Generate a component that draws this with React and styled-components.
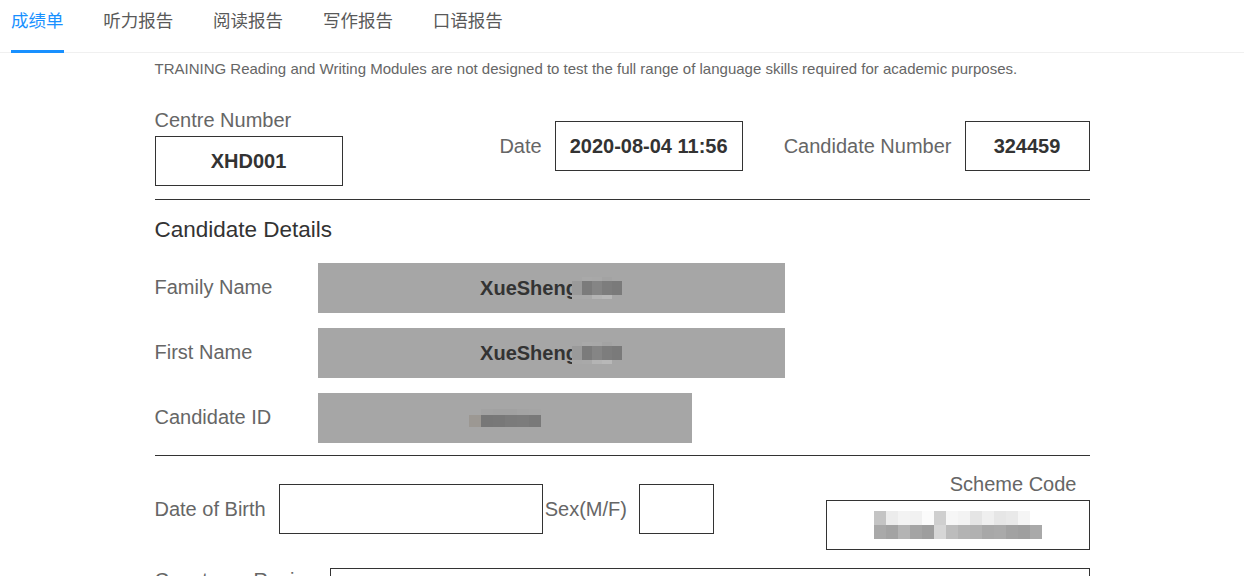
import React from "react";
import styled, { createGlobalStyle } from "styled-components";

const GlobalStyle = createGlobalStyle`
  html, body {
    margin: 0;
    padding: 0;
    background: #fff;
  }
  body {
    font-family: "Liberation Sans", Arial, sans-serif;
    overflow: hidden;
  }
`;

const tabs = ["成绩单", "听力报告", "阅读报告", "写作报告", "口语报告"];

const Page = styled.div`
  height: 576px;
  display: flex;
  flex-direction: column;
  overflow: hidden;
`;

const TabNav = styled.div`
  display: flex;
  gap: 39.8px;
  padding-left: 11px;
  height: 52px;
  border-bottom: 1px solid #f0f0f0;
  flex-shrink: 0;
`;

const Tab = styled.div`
  font-family: "Noto Sans CJK SC", "Microsoft YaHei", sans-serif;
  font-size: 17.5px;
  line-height: 40px;
  height: 50px;
  margin-bottom: -1px;
  color: ${(p) => (p.$active ? "#1890ff" : "#595959")};
  border-bottom: 3px solid ${(p) => (p.$active ? "#1890ff" : "transparent")};
  cursor: pointer;
`;

const Scroller = styled.div`
  flex: 1;
  overflow: hidden;
`;

const Sheet = styled.div`
  width: 935px;
  margin: 0 auto;
`;

const Notice = styled.div`
  margin-top: -20px;
  font-size: 15px;
  line-height: 24px;
  color: #666;
  white-space: nowrap;
`;

const HeaderRow = styled.div`
  display: flex;
  align-items: center;
  margin-top: 27px;
`;

const Stack = styled.div`
  display: flex;
  flex-direction: column;
  align-items: ${(p) => p.$align || "flex-start"};
  gap: 4px;
`;

const Inline = styled.div`
  display: flex;
  align-items: center;
  gap: ${(p) => p.$gap || 13}px;
`;

const RightCluster = styled.div`
  margin-left: auto;
  margin-bottom: 2px;
  display: flex;
  align-items: center;
  gap: 41px;
`;

const Label = styled.span`
  font-size: 20px;
  line-height: 24px;
  color: #666;
  white-space: nowrap;
  padding-right: ${(p) => p.$pr || 0}px;
`;

const ValueBox = styled.div`
  box-sizing: border-box;
  width: ${(p) => p.$w}px;
  height: 50px;
  border: 1px solid #333;
  display: flex;
  align-items: center;
  justify-content: center;
  font-size: 20px;
  font-weight: bold;
  color: #333;
  flex-shrink: 0;
`;

const Divider = styled.div`
  height: 1px;
  background: #333;
  margin-top: ${(p) => p.$mt}px;
`;

const SectionTitle = styled.div`
  font-size: 22.5px;
  line-height: 30px;
  color: #333;
  margin-top: 15px;
  margin-bottom: 18px;
`;

const DetailList = styled.div`
  display: flex;
  flex-direction: column;
  gap: 15px;
`;

const DetailRow = styled.div`
  display: flex;
  align-items: center;
`;

const DetailLabel = styled.span`
  width: 163px;
  font-size: 20px;
  line-height: 22px;
  margin-bottom: 2px;
  color: #666;
`;

const GreyField = styled.div`
  width: ${(p) => p.$w}px;
  height: 50px;
  background: #a6a6a6;
  display: flex;
  align-items: center;
  justify-content: center;
  font-size: 20px;
  font-weight: bold;
  color: #333;
`;

const MosaicWrap = styled.span`
  display: inline-flex;
  flex-direction: column;
  vertical-align: middle;
  margin-left: ${(p) => p.$ml || 0}px;
`;

const MosaicRow = styled.span`
  display: flex;
  height: ${(p) => p.$h}px;
`;

const Cell = styled.span`
  display: block;
  width: ${(p) => p.$w}px;
  height: 100%;
  background: ${(p) => p.$c};
`;

const Mosaic = ({ rows, cell, ml }) => (
  <MosaicWrap $ml={ml}>
    {rows.map((r, i) => (
      <MosaicRow key={i} $h={r.h}>
        {r.colors.map((c, j) => (
          <Cell key={j} $w={cell} $c={c} />
        ))}
      </MosaicRow>
    ))}
  </MosaicWrap>
);

const NameValue = styled.span`
  display: inline-flex;
  align-items: center;
`;

const BirthRow = styled.div`
  display: flex;
  align-items: flex-start;
  margin-top: 16px;
`;

const BirthGroup = styled.div`
  display: flex;
  align-items: center;
  margin-top: 12px;
`;

const SexLabel = styled(Label)`
  margin-left: 2px;
  margin-right: 12px;
`;

const SchemeGroup = styled(Stack)`
  margin-left: auto;
`;

const CountryRow = styled.div`
  display: flex;
  align-items: flex-start;
  gap: 13px;
  margin-top: 18px;
`;

const nameMosaic = [
  { h: 4, colors: ["#a6a6a6", "#a9a9a9", "#a8a8a8", "#a3a3a3", "#a6a6a6"] },
  { h: 14, colors: ["#9a9a9a", "#7b7b7b", "#858585", "#7d7d7d", "#7a7a7a"] },
  { h: 4, colors: ["#a8a8a8", "#a9a9a9", "#b4b4b4", "#b8b8b8", "#a6a6a6"] },
];

const idMosaic = [
  { h: 6, colors: ["#a6a6a6", "#a2a2a2", "#a1a1a1", "#a1a1a1", "#a3a3a3", "#a4a4a4"] },
  { h: 12, colors: ["#9c9893", "#777", "#787878", "#7b7b7b", "#7c7c7c", "#797979"] },
];

const schemeMosaic = [
  {
    h: 14,
    colors: ["#c4c4c4", "#ececec", "#f3f3f3", "#f1f1f1", "#fbfbfb", "#cfcfcf", "#f6f6f6", "#f3f3f3", "#e5e5e5", "#efefef", "#e6e6e6", "#e9e9e9", "#f5f5f5", "#ffffff"],
  },
  {
    h: 14,
    colors: ["#a9a9a9", "#a3a3a3", "#b4b4b4", "#a4a4a4", "#9e9e9e", "#d6d6d6", "#bcbcbc", "#b3b3b3", "#b1b1b1", "#a8a8a8", "#aaaaaa", "#a2a2a2", "#9f9f9f", "#a9a9a9"],
  },
];

export default function App() {
  return (
    <Page>
      <GlobalStyle />
      <TabNav>
        {tabs.map((t, i) => (
          <Tab key={t} $active={i === 0}>
            {t}
          </Tab>
        ))}
      </TabNav>
      <Scroller>
        <Sheet>
          <Notice>
            The ACADEMIC Reading and Writing Modules assess whether a candidate is ready to study or train in the medium of English at a GENERAL
            <br />
            TRAINING Reading and Writing Modules are not designed to test the full range of language skills required for academic purposes.
          </Notice>

          <HeaderRow>
            <Stack>
              <Label>Centre Number</Label>
              <ValueBox $w={188}>XHD001</ValueBox>
            </Stack>
            <RightCluster>
              <Inline>
                <Label>Date</Label>
                <ValueBox $w={188}>2020-08-04 11:56</ValueBox>
              </Inline>
              <Inline>
                <Label>Candidate Number</Label>
                <ValueBox $w={125}>324459</ValueBox>
              </Inline>
            </RightCluster>
          </HeaderRow>

          <Divider $mt={13} />

          <SectionTitle>Candidate Details</SectionTitle>
          <DetailList>
            <DetailRow>
              <DetailLabel>Family Name</DetailLabel>
              <GreyField $w={467}>
                <NameValue>
                  XueSheng
                  <Mosaic rows={nameMosaic} cell={10} ml={-6} />
                </NameValue>
              </GreyField>
            </DetailRow>
            <DetailRow>
              <DetailLabel>First Name</DetailLabel>
              <GreyField $w={467}>
                <NameValue>
                  XueSheng
                  <Mosaic rows={nameMosaic} cell={10} ml={-6} />
                </NameValue>
              </GreyField>
            </DetailRow>
            <DetailRow>
              <DetailLabel>Candidate ID</DetailLabel>
              <GreyField $w={374}>
                <Mosaic rows={idMosaic} cell={12} />
              </GreyField>
            </DetailRow>
          </DetailList>

          <Divider $mt={12} />

          <BirthRow>
            <BirthGroup>
              <Inline>
                <Label>Date of Birth</Label>
                <ValueBox $w={264} />
              </Inline>
              <SexLabel>Sex(M/F)</SexLabel>
              <ValueBox $w={75} />
            </BirthGroup>
            <SchemeGroup $align="flex-end">
              <Label $pr={13}>Scheme Code</Label>
              <ValueBox $w={264}>
                <Mosaic rows={schemeMosaic} cell={12} />
              </ValueBox>
            </SchemeGroup>
          </BirthRow>

          <CountryRow>
            <Label>Country or Region</Label>
            <ValueBox $w={760} />
          </CountryRow>
        </Sheet>
      </Scroller>
    </Page>
  );
}
